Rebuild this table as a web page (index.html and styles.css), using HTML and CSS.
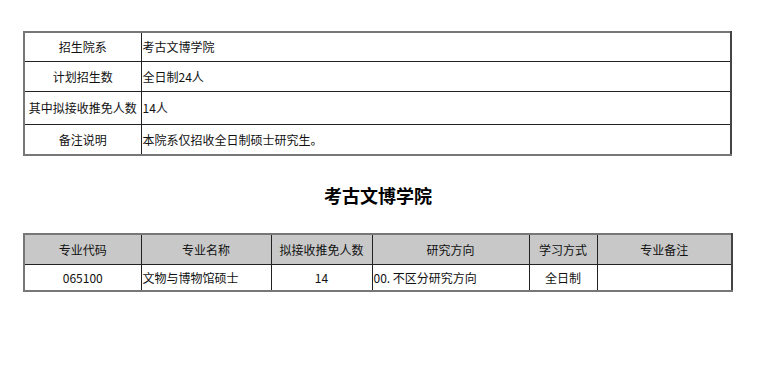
FILE: index.html
```html
<!DOCTYPE html>
<html lang="zh">
<head>
<meta charset="utf-8">
<link rel="stylesheet" href="styles.css">
</head>
<body>
<div class="page">
  <table class="info">
    <colgroup><col class="c-label"><col></colgroup>
    <tr class="r1"><td class="label">招生院系</td><td>考古文博学院</td></tr>
    <tr class="r2"><td class="label">计划招生数</td><td>全日制24人</td></tr>
    <tr class="r3"><td class="label">其中拟接收推免人数</td><td>14人</td></tr>
    <tr class="r4"><td class="label">备注说明</td><td>本院系仅招收全日制硕士研究生。</td></tr>
  </table>
  <h1 class="title">考古文博学院</h1>
  <table class="majors">
    <colgroup>
      <col class="m1"><col class="m2"><col class="m3"><col class="m4"><col class="m5"><col class="m6">
    </colgroup>
    <tr class="head">
      <th>专业代码</th><th>专业名称</th><th>拟接收推免人数</th><th>研究方向</th><th>学习方式</th><th>专业备注</th>
    </tr>
    <tr class="row">
      <td class="center">065100</td><td>文物与博物馆硕士</td><td class="center">14</td><td>00. 不区分研究方向</td><td class="center">全日制</td><td></td>
    </tr>
  </table>
</div>
</body>
</html>
```
FILE: styles.css
```css
html, body {
  margin: 0;
  padding: 0;
  background: #fff;
}
body {
  font-family: "Noto Sans CJK SC", "Noto Sans", sans-serif;
  font-size: 12px;
  color: #111;
}
.page {
  padding: 31px 0 0 23px;
  width: 710px;
}
table {
  border-collapse: collapse;
  table-layout: fixed;
  width: 709px;
}
td, th {
  border: 1px solid #222;
  padding: 0 1px;
  font-weight: normal;
  white-space: nowrap;
  overflow: hidden;
  line-height: 16px;
}
table.info, table.majors {
  border-top: 2px solid #777;
  border-left: 2px solid #777;
  border-right: 2px solid #444;
  border-bottom: 2px solid #777;
}
.c-label { width: 117px; }
.label { text-align: center; }
.r1 td { height: 28px; }
.r2 td { height: 29px; }
.r3 td { height: 32px; }
.r4 td { height: 29px; }
.title {
  margin: 0;
  padding: 27px 0 0 0;
  height: 77px;
  box-sizing: border-box;
  text-align: center;
  font-size: 18px;
  font-weight: bold;
  line-height: 24px;
  color: #000;
}
.m1 { width: 117px; }
.m2 { width: 130px; }
.m3 { width: 101px; }
.m4 { width: 157px; }
.m5 { width: 68px; }
.m6 { width: 135px; }
.head th {
  background: #c8c8c8;
  height: 29px;
  text-align: center;
}
.row td { height: 25px; }
.center { text-align: center; }
```
